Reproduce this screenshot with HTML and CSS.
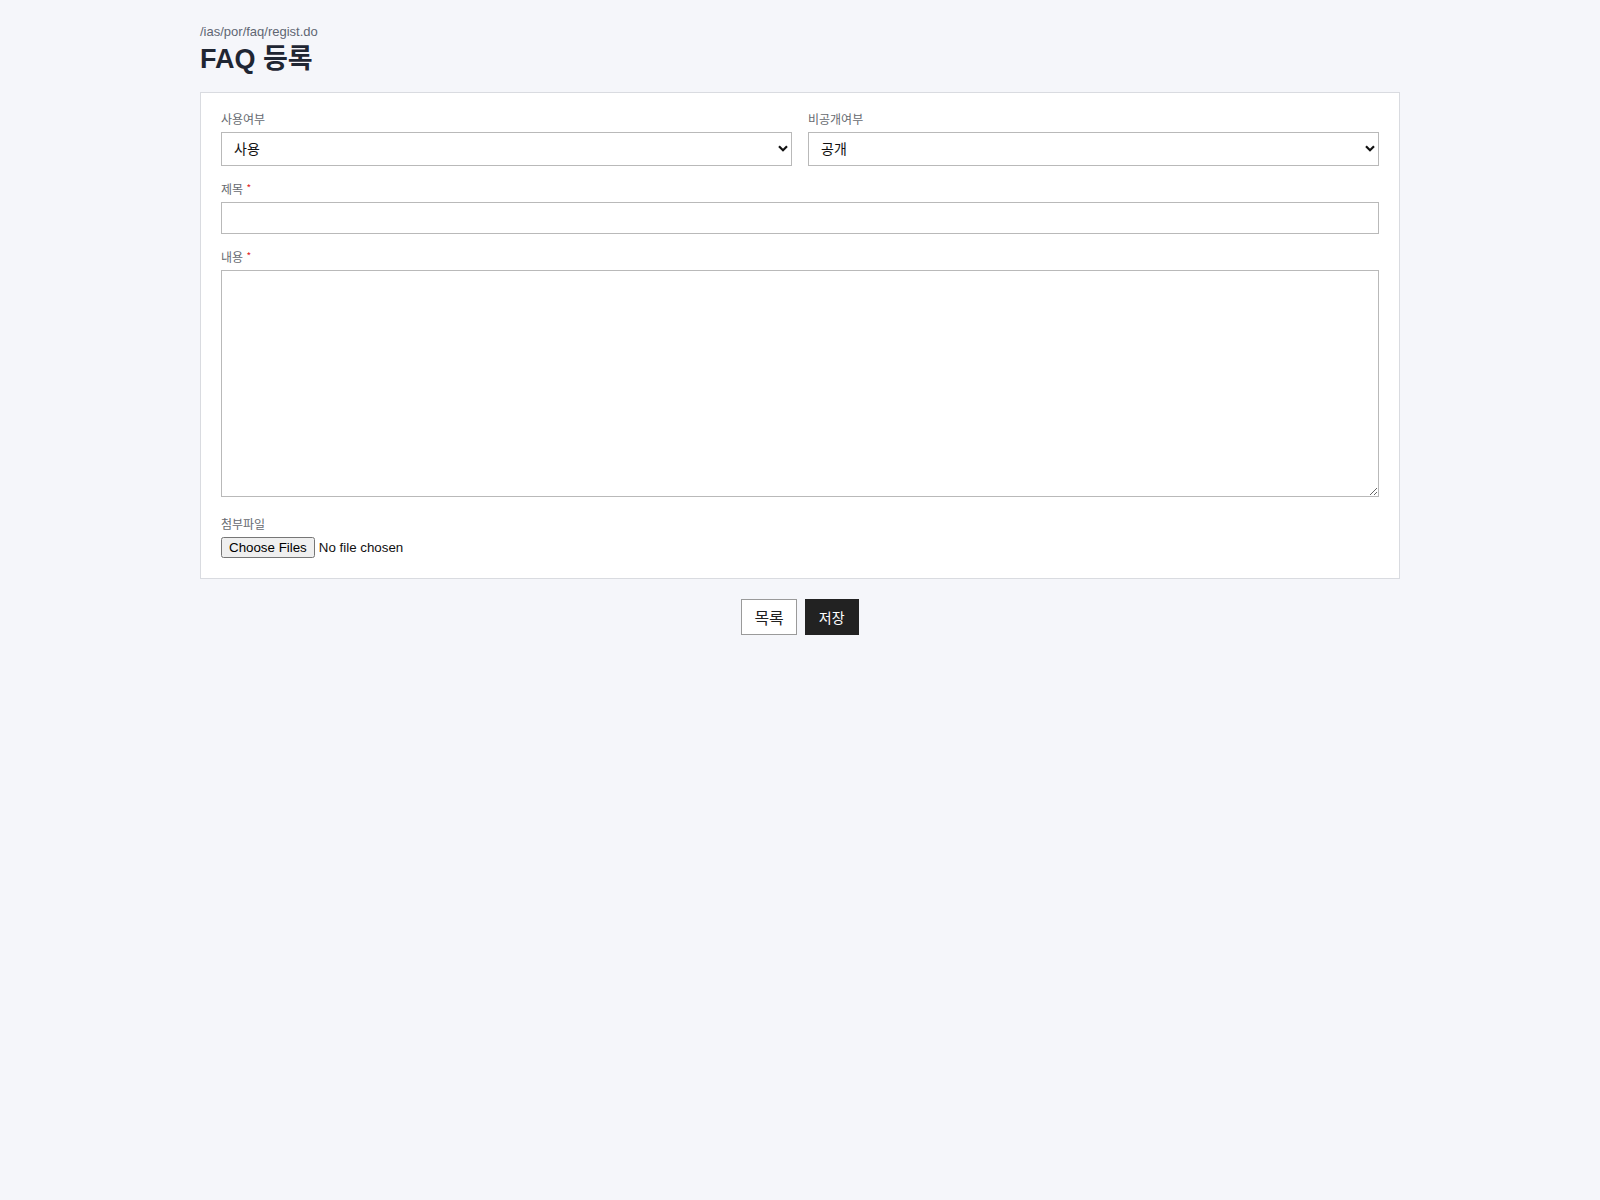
FILE: index.html
```html
<!DOCTYPE html>
<html lang="ko">
<head>
<meta charset="utf-8">
<title>FAQ 등록</title>
<link rel="stylesheet" href="styles.css">
</head>
<body>
<div class="page">
  <p class="path">/ias/por/faq/regist.do</p>
  <h1 class="title">FAQ 등록</h1>
  <form class="card">
    <div class="row">
      <div class="field">
        <label class="label">사용여부</label>
        <div class="select-wrap">
          <select class="control select">
            <option>사용</option>
            <option>미사용</option>
          </select>
          <svg class="chev" width="10" height="7" viewBox="0 0 10 7"><path d="M1 1.2 L5 5.2 L9 1.2" fill="none" stroke="#111" stroke-width="2.2"/></svg>
        </div>
      </div>
      <div class="field">
        <label class="label">비공개여부</label>
        <div class="select-wrap">
          <select class="control select">
            <option>공개</option>
            <option>비공개</option>
          </select>
          <svg class="chev" width="10" height="7" viewBox="0 0 10 7"><path d="M1 1.2 L5 5.2 L9 1.2" fill="none" stroke="#111" stroke-width="2.2"/></svg>
        </div>
      </div>
    </div>
    <div class="field">
      <label class="label">제목 <span class="req">*</span></label>
      <input class="control input" type="text">
    </div>
    <div class="field field-area">
      <label class="label">내용 <span class="req">*</span></label>
      <textarea class="control textarea"></textarea>
    </div>
    <div class="field field-last">
      <label class="label">첨부파일</label>
      <input class="file" type="file" multiple>
    </div>
  </form>
  <div class="actions">
    <button type="button" class="btn btn-line">목록</button>
    <button type="button" class="btn btn-dark">저장</button>
  </div>
</div>
</body>
</html>
```

FILE: styles.css
```css
html, body {
  margin: 0;
  padding: 0;
  background: #f5f6fa;
  font-family: "Liberation Sans", Arial, "Noto Sans CJK KR", sans-serif;
  color: #222;
}

.page {
  width: 1200px;
  margin: 0 auto;
  padding-top: 24px;
}

.path {
  margin: 0;
  font-size: 13px;
  line-height: 16px;
  color: #5f6673;
}

.title {
  margin: 3px 0 17px;
  height: 32px;
  font-size: 27px;
  line-height: 32px;
  font-weight: 700;
  color: #1f2633;
}

.card {
  display: block;
  margin: 0;
  background: #fff;
  border: 1px solid #d9dbe0;
  padding: 20px;
}

.row {
  display: grid;
  grid-template-columns: 1fr 1fr;
  column-gap: 16px;
}

.field {
  margin-bottom: 17px;
}

.field-area {
  margin-bottom: 21px;
}

.field-last {
  margin-bottom: 0;
}

.label {
  display: block;
  height: 11px;
  font-family: "Noto Sans CJK KR", sans-serif;
  font-size: 12px;
  line-height: 11px;
  margin-bottom: 8px;
  color: #666a70;
}

.req {
  color: #e02424;
  font-size: 10px;
  line-height: 0;
  vertical-align: 2px;
}

.control {
  display: block;
  box-sizing: border-box;
  width: 100%;
  margin: 0;
  border: 1px solid #b9b9b9;
  border-radius: 0;
  background: #fff;
  font-family: "Liberation Sans", Arial, "Noto Sans CJK KR", sans-serif;
  font-size: 14px;
  color: #111;
  outline: none;
}

.select-wrap {
  position: relative;
}

.select {
  height: 34px;
  padding: 0 30px 0 12px;
  -webkit-appearance: none;
  appearance: none;
}

.chev {
  position: absolute;
  right: 4px;
  top: 13px;
  pointer-events: none;
}

.input {
  height: 32px;
  padding: 0 12px;
}

.textarea {
  height: 227px;
  padding: 8px 12px;
  resize: vertical;
}

.file {
  display: block;
  height: 21px;
  font-family: "Liberation Sans", Arial, sans-serif;
  font-size: 13.333px;
  color: #111;
}

.actions {
  display: flex;
  justify-content: center;
  gap: 8px;
  margin-top: 20px;
}

.btn {
  box-sizing: border-box;
  height: 36px;
  margin: 0;
  border-radius: 0;
  font-family: "Noto Sans CJK KR", "Liberation Sans", sans-serif;
  line-height: 34px;
  cursor: pointer;
}

.btn-line {
  padding: 0 12px;
  background: #fff;
  border: 1px solid #9a9a9a;
  color: #222;
  font-size: 16px;
}

.btn-dark {
  padding: 0 13px;
  background: #222;
  border: 1px solid #222;
  color: #fff;
  font-size: 14px;
}
```
